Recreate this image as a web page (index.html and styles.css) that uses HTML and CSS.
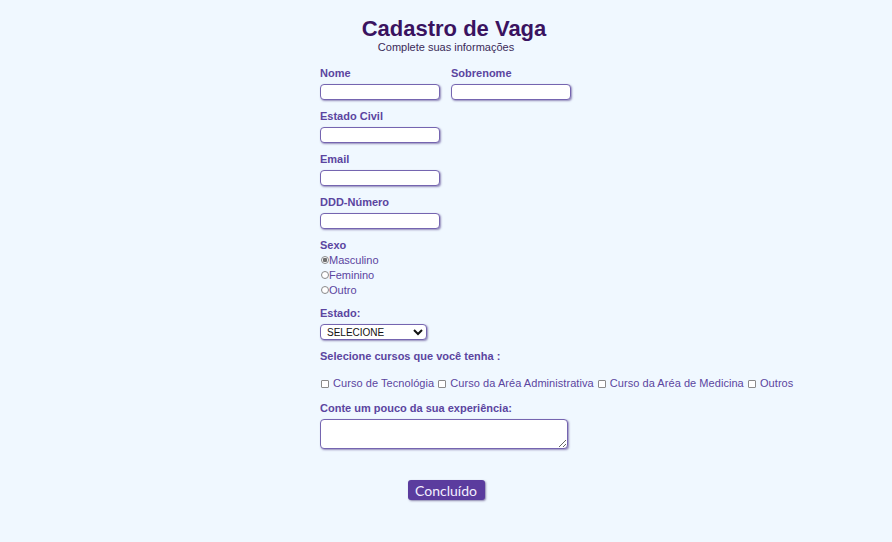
FILE: index.html
```html
<!DOCTYPE html>
<html lang="pt-BR">
<head>
<meta charset="utf-8">
<title>Cadastro de Vaga</title>
<link rel="stylesheet" href="styles.css">
</head>
<body>
<header class="head">
  <h1 class="title">Cadastro de Vaga</h1>
  <p class="subtitle">Complete suas informações</p>
</header>
<form class="form">
  <div class="row">
    <div class="field">
      <label class="lbl" for="nome">Nome</label>
      <input class="inp" id="nome" type="text">
    </div>
    <div class="field">
      <label class="lbl" for="sobrenome">Sobrenome</label>
      <input class="inp" id="sobrenome" type="text">
    </div>
  </div>
  <div class="field">
    <label class="lbl" for="civil">Estado Civil</label>
    <input class="inp" id="civil" type="text">
  </div>
  <div class="field">
    <label class="lbl" for="email">Email</label>
    <input class="inp" id="email" type="email">
  </div>
  <div class="field">
    <label class="lbl" for="ddd">DDD-Número</label>
    <input class="inp" id="ddd" type="text">
  </div>
  <div class="field radios">
    <span class="lbl">Sexo</span>
    <label class="opt"><input class="radio" type="radio" name="sexo" checked>Masculino</label>
    <label class="opt"><input class="radio" type="radio" name="sexo">Feminino</label>
    <label class="opt"><input class="radio" type="radio" name="sexo">Outro</label>
  </div>
  <div class="field">
    <label class="lbl" for="estado">Estado:</label>
    <select class="sel" id="estado">
      <option>SELECIONE</option>
    </select>
  </div>
  <div class="field cursos">
    <span class="lbl">Selecione cursos que você tenha :</span>
    <div class="checks"><label class="chk"><input class="box" type="checkbox"> Curso de Tecnológia</label> <label class="chk"><input class="box" type="checkbox"> Curso da Aréa Administrativa</label> <label class="chk"><input class="box" type="checkbox"> Curso da Aréa de Medicina</label> <label class="chk"><input class="box" type="checkbox"> Outros</label></div>
  </div>
  <div class="field">
    <label class="lbl" for="exp">Conte um pouco da sua experiência:</label>
    <textarea class="txt" id="exp"></textarea>
  </div>
  <div class="actions">
    <button class="btn" type="button">Concluído</button>
  </div>
</form>
</body>
</html>
```

FILE: styles.css
```css
html, body {
  margin: 0;
  padding: 0;
  background: #f0f8ff;
}
body {
  font-family: "Liberation Sans", Arial, sans-serif;
  min-height: 542px;
  padding-top: 16px;
  box-sizing: border-box;
}
.head {
  text-align: center;
}
.title {
  margin: 0;
  padding-left: 16px;
  font-size: 22px;
  line-height: 25px;
  font-weight: bold;
  color: #3a1360;
}
.subtitle {
  margin: 0;
  font-size: 11px;
  line-height: 13px;
  color: #3a2a58;
}
.form {
  width: 252px;
  margin: 13px auto 0;
  display: flex;
  flex-direction: column;
}
.row {
  display: flex;
  gap: 11px;
}
.field {
  display: flex;
  flex-direction: column;
  align-items: flex-start;
  margin-bottom: 10px;
}
.lbl {
  display: block;
  font-size: 11px;
  line-height: 13px;
  font-weight: bold;
  color: #5b45a0;
  margin-bottom: 4px;
  white-space: nowrap;
}
.inp {
  box-sizing: border-box;
  width: 120px;
  height: 16px;
  margin: 0;
  padding: 0 3px;
  border: 1px solid #7565b0;
  border-radius: 4px;
  background: #fff;
  box-shadow: 1px 1px 2px rgba(70, 50, 130, 0.55);
  outline: none;
}
.radios .lbl {
  margin-bottom: 0;
}
.opt {
  display: flex;
  align-items: center;
  height: 15px;
  font-size: 11px;
  color: #5b45a0;
}
.radio {
  appearance: none;
  -webkit-appearance: none;
  width: 8px;
  height: 8px;
  margin: 0 0 0 1px;
  border: 1px solid #8a8a8a;
  border-radius: 50%;
  background: #fff;
  box-sizing: border-box;
}
.radio:checked {
  background: radial-gradient(circle, #6f6f6f 0 2px, #fff 2.5px);
}
.sel {
  box-sizing: border-box;
  width: 107px;
  height: 16px;
  margin: 0;
  padding: 0 2px;
  font-family: "Liberation Sans", Arial, sans-serif;
  font-size: 10px;
  color: #111;
  border: 1px solid #7565b0;
  border-radius: 4px;
  background: #fff;
  box-shadow: 1px 1px 2px rgba(70, 50, 130, 0.55);
}
.cursos .lbl {
  margin-bottom: 14px;
}
.checks {
  white-space: nowrap;
  font-size: 11px;
  line-height: 13px;
  letter-spacing: 0.05px;
  color: #5b45a0;
  margin-bottom: 2px;
}
.chk {
  display: inline;
}
.box {
  appearance: none;
  -webkit-appearance: none;
  width: 8px;
  height: 8px;
  margin: 0 1px 0 1px;
  vertical-align: -0.5px;
  border: 1px solid #8a8a8a;
  border-radius: 1px;
  background: #fff;
  box-sizing: border-box;
}
.txt {
  box-sizing: border-box;
  width: 248px;
  height: 30px;
  margin: 0;
  border: 1px solid #7565b0;
  border-radius: 4px;
  background: #fff;
  box-shadow: 1px 1px 2px rgba(70, 50, 130, 0.55);
  resize: both;
}
.actions {
  display: flex;
  justify-content: center;
  margin-top: 21px;
}
.btn {
  width: 77px;
  height: 20px;
  padding: 0;
  border: none;
  border-radius: 3px;
  background: #5b3c9e;
  color: #f3efff;
  font-family: Lato, "Liberation Sans", sans-serif;
  font-size: 14px;
  box-shadow: 1px 1px 2px rgba(40, 20, 90, 0.5);
}
```
